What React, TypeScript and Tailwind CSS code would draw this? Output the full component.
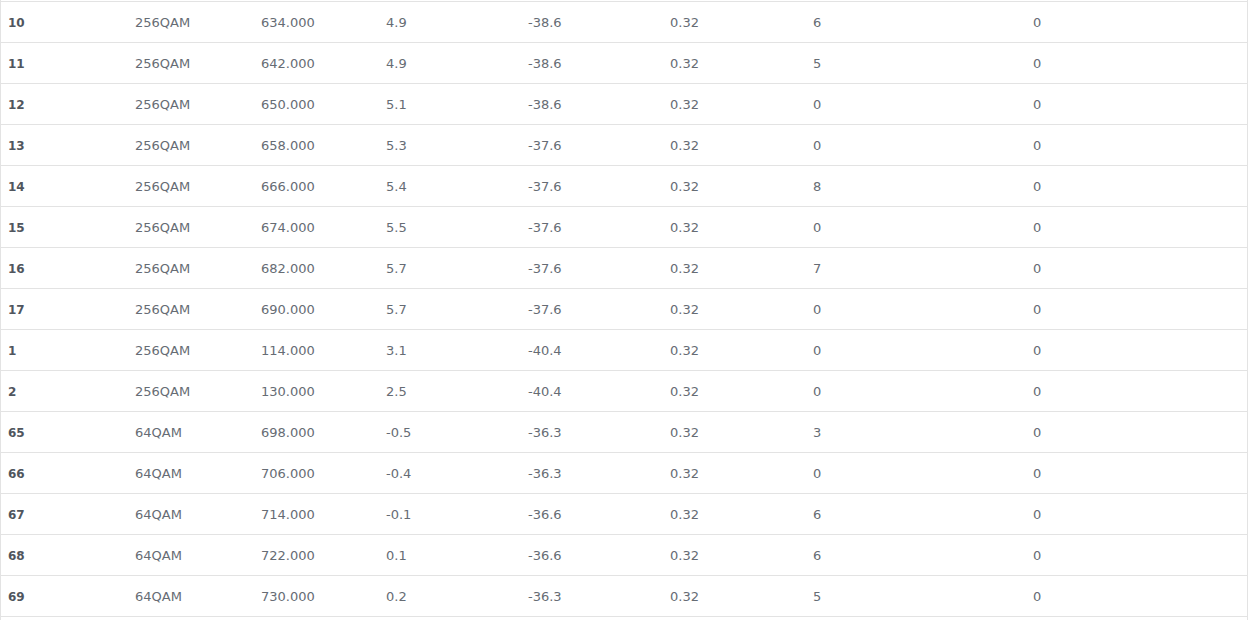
const rows = [
  ['10', '256QAM', '634.000', '4.9', '-38.6', '0.32', '6', '0'],
  ['11', '256QAM', '642.000', '4.9', '-38.6', '0.32', '5', '0'],
  ['12', '256QAM', '650.000', '5.1', '-38.6', '0.32', '0', '0'],
  ['13', '256QAM', '658.000', '5.3', '-37.6', '0.32', '0', '0'],
  ['14', '256QAM', '666.000', '5.4', '-37.6', '0.32', '8', '0'],
  ['15', '256QAM', '674.000', '5.5', '-37.6', '0.32', '0', '0'],
  ['16', '256QAM', '682.000', '5.7', '-37.6', '0.32', '7', '0'],
  ['17', '256QAM', '690.000', '5.7', '-37.6', '0.32', '0', '0'],
  ['1', '256QAM', '114.000', '3.1', '-40.4', '0.32', '0', '0'],
  ['2', '256QAM', '130.000', '2.5', '-40.4', '0.32', '0', '0'],
  ['65', '64QAM', '698.000', '-0.5', '-36.3', '0.32', '3', '0'],
  ['66', '64QAM', '706.000', '-0.4', '-36.3', '0.32', '0', '0'],
  ['67', '64QAM', '714.000', '-0.1', '-36.6', '0.32', '6', '0'],
  ['68', '64QAM', '722.000', '0.1', '-36.6', '0.32', '6', '0'],
  ['69', '64QAM', '730.000', '0.2', '-36.3', '0.32', '5', '0'],
];

const App = () => {
  return (
    <div className="h-[620px] overflow-hidden bg-white">
      <div
        className="w-[1248px] border-x border-[#e3e3e3] pt-px text-[13px] text-[#666c74]"
        style={{ fontFamily: '"DejaVu Sans", "Open Sans", sans-serif' }}
      >
        {rows.map((r, i) => (
          <div
            key={i}
            className="grid h-[41px] grid-cols-[127px_126px_125px_142px_142px_143px_220px_1fr] items-center border-t border-[#e3e3e3] pt-[2px]"
          >
            {r.map((c, j) => (
              <div key={j} className={`pl-[7px] ${j === 0 ? 'text-[12px] font-bold text-[#50565e]' : ''}`}>
                {c}
              </div>
            ))}
          </div>
        ))}
        <div className="h-[10px] border-t border-[#e3e3e3]" />
      </div>
    </div>
  );
};

export default App;
